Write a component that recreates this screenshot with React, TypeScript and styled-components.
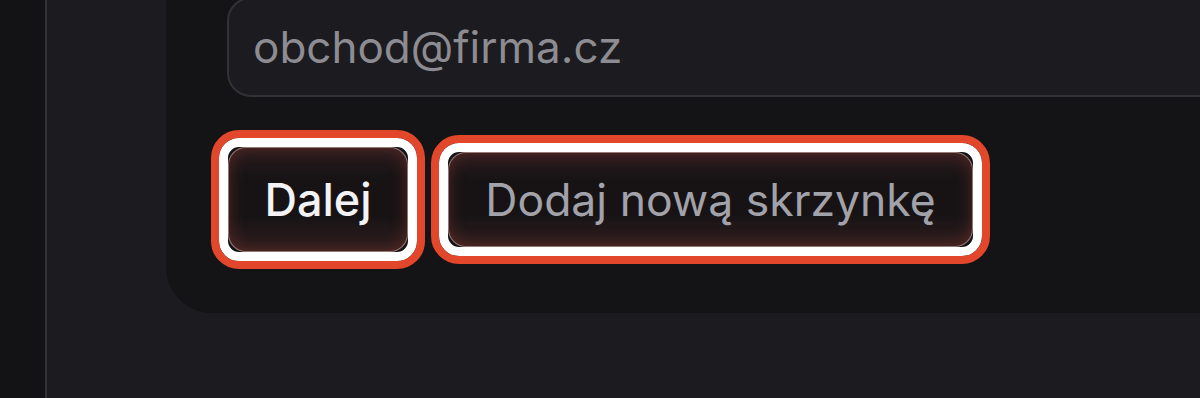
import React from 'react'
import styled, { createGlobalStyle } from 'styled-components'

const GlobalStyle = createGlobalStyle`
  html, body {
    margin: 0;
    padding: 0;
    background: #1c1b1f;
    overflow: hidden;
  }
  #root {
    height: 398px;
  }
`

export const Shell = styled.div`
  display: flex;
  width: 1200px;
  height: 398px;
  font-family: Inter, 'Noto Sans', sans-serif;
  background: #1c1b1f;
  overflow: hidden;
`

export const Rail = styled.aside`
  width: 45px;
  flex: none;
  background: #131215;
  border-right: 2px solid #333237;
`

export const Main = styled.main`
  flex: 1;
  min-width: 0;
  padding-left: 119px;
`

export const Card = styled.section`
  margin-right: -200px;
  background: #141315;
  border-radius: 0 0 0 46px;
  padding: 0 0 61px 61px;
`

export const Field = styled.div`
  box-sizing: border-box;
  margin-top: -3px;
  height: 100px;
  border: 2px solid #323136;
  border-radius: 24px;
  background: #1c1b1f;
  display: flex;
  align-items: center;
  padding: 0 24px;
  color: #8d8c92;
  font-size: 44px;
`

export const Actions = styled.div`
  display: flex;
  align-items: center;
  gap: 40px;
  margin-top: 50px;
  margin-left: 1px;
`

export const Button = styled.button<{ $primary?: boolean }>`
  position: relative;
  box-sizing: border-box;
  height: ${(p) => (p.$primary ? '105px' : '95px')};
  width: ${(p) => (p.$primary ? '180px' : '525px')};
  padding: 0;
  border: 1.5px solid rgba(240, 200, 190, 0.55);
  border-radius: 18px;
  font-family: Inter, 'Noto Sans', sans-serif;
  font-size: ${(p) => (p.$primary ? '45px' : '44.5px')};
  font-weight: ${(p) => (p.$primary ? 500 : 400)};
  color: ${(p) => (p.$primary ? '#f3f3f5' : '#a2a2aa')};
  background: linear-gradient(180deg, #2a1b1d 0%, #171315 30%, #171315 66%, #301e1e 100%);
  box-shadow: inset 0 0 16px rgba(120, 52, 44, 0.6);
  cursor: pointer;

  /* highlight ring laid over the button */
  &::after {
    content: '';
    position: absolute;
    inset: -10px;
    border: 9px solid #ffffff;
    border-radius: 20px;
    outline: 8px solid #e2472b;
    pointer-events: none;
  }
`

export default function App() {
  return (
    <>
      <GlobalStyle />
      <Shell>
        <Rail />
        <Main>
          <Card>
            <Field>obchod@firma.cz</Field>
            <Actions>
              <Button $primary>Dalej</Button>
              <Button>Dodaj nową skrzynkę</Button>
            </Actions>
          </Card>
        </Main>
      </Shell>
    </>
  )
}
